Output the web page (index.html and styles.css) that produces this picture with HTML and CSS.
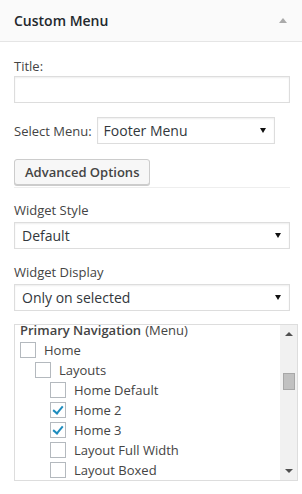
FILE: index.html
```html
<!DOCTYPE html>
<html lang="en">
<head>
    <meta charset="UTF-8">
    <meta name="viewport" content="width=device-width, initial-scale=1.0">
    <title>Custom Menu Widget</title>
    <link rel="stylesheet" href="styles.css">
</head>
<body>
    <div class="widget">
        <div class="widget-top">
            <h3 class="widget-title">Custom Menu</h3>
            <span class="toggle-arrow"></span>
        </div>
        <div class="widget-inside">
            <div class="field title-field">
                <label class="field-label">Title:</label>
                <input type="text" class="text-input">
            </div>
            <div class="field inline">
                <label class="inline-label">Select Menu:</label>
                <div class="select small">
                    <span>Footer Menu</span>
                    <span class="select-arrow"></span>
                </div>
            </div>
            <div class="advanced">
                <button class="button">Advanced Options</button>
            </div>
            <div class="field">
                <label class="field-label">Widget Style</label>
                <div class="select">
                    <span>Default</span>
                    <span class="select-arrow"></span>
                </div>
            </div>
            <div class="field">
                <label class="field-label">Widget Display</label>
                <div class="select">
                    <span>Only on selected</span>
                    <span class="select-arrow"></span>
                </div>
            </div>
            <div class="listbox">
                <div class="list">
                    <div class="list-row heading"><strong>Primary Navigation</strong> (Menu)</div>
                    <div class="list-row level-0"><span class="check"></span>Home</div>
                    <div class="list-row level-1"><span class="check"></span>Layouts</div>
                    <div class="list-row level-2"><span class="check"></span>Home Default</div>
                    <div class="list-row level-2"><span class="check checked"></span>Home 2</div>
                    <div class="list-row level-2"><span class="check checked"></span>Home 3</div>
                    <div class="list-row level-2"><span class="check"></span>Layout Full Width</div>
                    <div class="list-row level-2"><span class="check"></span>Layout Boxed</div>
                </div>
                <div class="scrollbar">
                    <span class="scroll-up"></span>
                    <div class="scroll-track">
                        <div class="scroll-thumb"></div>
                    </div>
                    <span class="scroll-down"></span>
                </div>
            </div>
        </div>
    </div>
</body>
</html>
```

FILE: styles.css
```css
body {
    margin: 0;
    font-family: 'Open Sans', sans-serif;
    font-size: 13px;
    color: #444;
    background: #fff;
}
.widget-top {
    height: 41px;
    background: #fafafa;
    border-bottom: 1px solid #e5e5e5;
    display: flex;
    align-items: center;
    justify-content: space-between;
    padding: 0 15px 0 14px;
}
.widget-title {
    margin: 0;
    font-size: 14px;
    font-weight: 600;
    color: #23282d;
}
.toggle-arrow {
    width: 0;
    height: 0;
    border-left: 4px solid transparent;
    border-right: 4px solid transparent;
    border-bottom: 5px solid #aaa;
}
.widget-inside {
    padding: 15px 12px 0 14px;
}
.field {
    margin-bottom: 14px;
}
.field-label {
    display: block;
    line-height: 18px;
    margin-bottom: 3px;
}
.title-field .field-label {
    margin-bottom: 1px;
}
.text-input {
    display: block;
    box-sizing: border-box;
    width: 100%;
    height: 27px;
    border: 1px solid #ddd;
    box-shadow: inset 0 1px 2px rgba(0, 0, 0, 0.07);
    margin: 0;
}
.field.inline {
    display: flex;
    align-items: center;
    margin: 0;
}
.inline-label {
    margin-right: 5px;
}
.select {
    box-sizing: border-box;
    height: 27px;
    border: 1px solid #ddd;
    display: flex;
    align-items: center;
    justify-content: space-between;
    padding: 0 8px 0 7px;
    font-size: 14px;
    color: #32373c;
    box-shadow: inset 0 1px 2px rgba(0, 0, 0, 0.07);
}
.select.small {
    width: 178px;
    padding-left: 6px;
}
.select-arrow {
    width: 0;
    height: 0;
    border-left: 3px solid transparent;
    border-right: 3px solid transparent;
    border-top: 5px solid #111;
}
.advanced {
    margin-top: 15px;
    padding-bottom: 1px;
    border-bottom: 1px solid #eee;
    margin-bottom: 13px;
}
.button {
    display: block;
    font-family: 'Open Sans', sans-serif;
    font-size: 13px;
    font-weight: 600;
    color: #444;
    background: #f7f7f7;
    border: 1px solid #ccc;
    border-radius: 3px;
    box-shadow: 0 1px 0 #ccc;
    height: 26px;
    padding: 0 10px;
    margin: 0 0 1px;
}
.listbox {
    display: flex;
    height: 157px;
    width: 284px;
    box-sizing: border-box;
    border: 1px solid #ddd;
    margin-top: -1px;
}
.list {
    flex: 1;
    margin-top: -5px;
    padding-left: 5px;
}
.list-row {
    height: 20px;
    display: flex;
    align-items: center;
    white-space: nowrap;
    color: #444;
}
.list-row.heading strong {
    font-weight: 600;
    margin-right: 4px;
}
.level-1 {
    padding-left: 15px;
}
.level-2 {
    padding-left: 30px;
}
.check {
    width: 16px;
    height: 16px;
    box-sizing: border-box;
    border: 1px solid #b4b9be;
    background: #fff;
    margin-right: 8px;
    position: relative;
}
.check.checked::after {
    content: "";
    position: absolute;
    left: 4px;
    top: 1px;
    width: 4px;
    height: 8px;
    border-right: 2px solid #1e8cbe;
    border-bottom: 2px solid #1e8cbe;
    transform: rotate(40deg);
}
.scrollbar {
    width: 17px;
    background: #f1f1f1;
    display: flex;
    flex-direction: column;
    align-items: center;
}
.scroll-up,
.scroll-down {
    width: 0;
    height: 0;
    border-left: 4px solid transparent;
    border-right: 4px solid transparent;
}
.scroll-up {
    border-bottom: 4px solid #505050;
    margin-top: 7px;
}
.scroll-down {
    border-top: 4px solid #505050;
    margin-bottom: 7px;
}
.scroll-track {
    flex: 1;
    width: 100%;
    padding-top: 37px;
    box-sizing: border-box;
}
.scroll-thumb {
    width: 12px;
    height: 17px;
    margin: 0 auto;
    background: #c1c1c1;
    border: 1px solid #a8a8a8;
    box-sizing: border-box;
}
```
